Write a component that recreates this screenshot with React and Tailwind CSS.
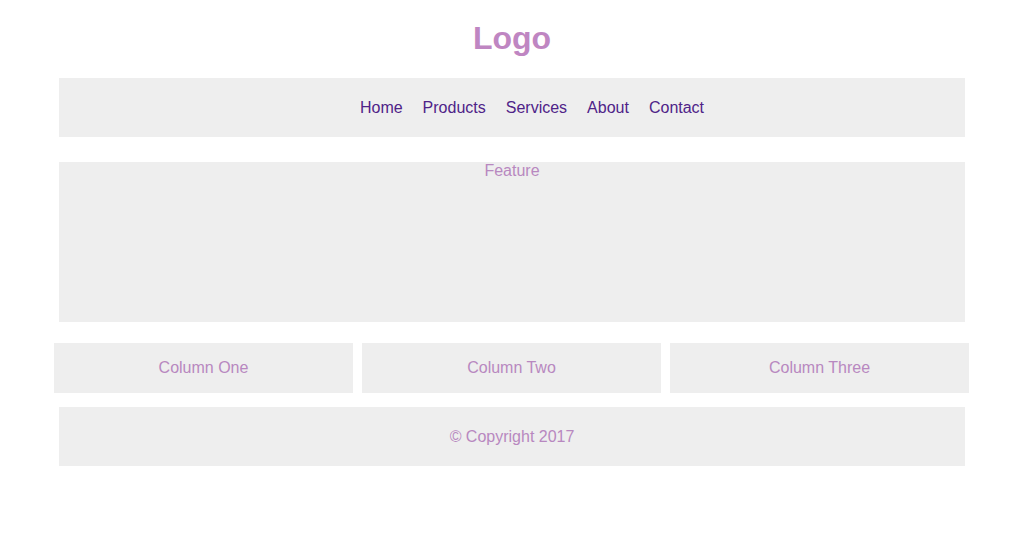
export default function App() {
  const links = ["Home", "Products", "Services", "About", "Contact"];
  const columns = ["Column One", "Column Two", "Column Three"];

  return (
    <div className="min-h-screen bg-white font-['Liberation_Sans',Arial,sans-serif] text-[16px]">
      <div className="mx-auto w-[906px] pt-[20px]">
        <h1 className="text-center text-[32px] font-bold leading-[37px] text-[#bf86c2]">
          Logo
        </h1>

        <nav className="mt-[21px] flex h-[59px] items-center justify-center bg-[#eeeeee] pl-[40px]">
          {links.map((link) => (
            <a
              key={link}
              href="#"
              className="px-[10px] leading-[18px] text-[#4f2388]"
            >
              {link}
            </a>
          ))}
        </nav>

        <section className="mt-[25px] h-[160px] bg-[#eeeeee] text-center leading-[18px] text-[#b888c0]">
          Feature
        </section>

        <div className="-ml-[5px] mt-[21px] grid w-[915px] grid-cols-3 gap-[9px]">
          {columns.map((col) => (
            <div
              key={col}
              className="flex h-[50px] items-center justify-center bg-[#eeeeee] text-[#b888c0]"
            >
              {col}
            </div>
          ))}
        </div>

        <footer className="mt-[14px] flex h-[59px] items-center justify-center bg-[#eeeeee] text-[#b888c0]">
          © Copyright 2017
        </footer>
      </div>
    </div>
  );
}
